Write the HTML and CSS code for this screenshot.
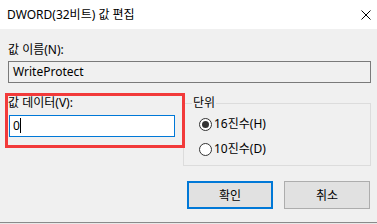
FILE: index.html
```html
<!DOCTYPE html>
<html lang="ko">

<head>
    <meta charset="UTF-8">
    <meta name="viewport" content="width=device-width, initial-scale=1.0">
    <link rel="stylesheet" href="styles.css">
    <title>DWORD(32비트) 값 편집</title>
</head>

<body>
    <div class="window">
        <div class="titlebar">
            <span class="title">DWORD(32비트) 값 편집</span>
            <svg class="close" width="10" height="10" viewBox="0 0 10 10">
                <path d="M0.5 0.5 L9.5 9.5 M9.5 0.5 L0.5 9.5" stroke="#000" stroke-width="1" fill="none" />
            </svg>
        </div>

        <div class="content">
            <div class="label">값 이름(N):</div>
            <div class="textbox readonly">WriteProtect</div>

            <div class="row">
                <div class="data">
                    <div class="label">값 데이터(V):</div>
                    <div class="textbox focused">0<span class="caret"></span></div>
                </div>

                <fieldset class="group">
                    <legend>단위</legend>
                    <div class="radio checked"><span class="dot"></span>16진수(H)</div>
                    <div class="radio"><span class="dot"></span>10진수(D)</div>
                </fieldset>
            </div>

            <div class="buttons">
                <div class="btn default">확인</div>
                <div class="btn">취소</div>
            </div>
        </div>

        <div class="behind"></div>
    </div>
</body>

</html>
```

FILE: styles.css
```css
* {
    margin: 0;
    padding: 0;
    box-sizing: border-box;
}

body {
    font-family: "Noto Sans", "Noto Sans CJK KR", sans-serif;
    font-size: 12px;
    color: #000;
}

.window {
    width: 377px;
    height: 224px;
    overflow: hidden;
    background-color: #f0f0f0;
}

.titlebar {
    height: 29px;
    background-color: #fff;
    display: flex;
    justify-content: space-between;
    align-items: center;
    padding: 0 6px 0 7px;
}

.title {
    line-height: 16px;
}

.close {
    display: block;
}

.content {
    height: 193px;
    padding: 13px 6px 0 8px;
}

.label {
    line-height: 16px;
}

.textbox {
    height: 22px;
    margin-top: 3px;
    border: 1px solid #7a7a7a;
    padding-left: 4px;
    line-height: 20px;
}

.readonly {
    background-color: #f0f0f0;
}

.row {
    display: flex;
    margin-top: 12px;
}

.data {
    position: relative;
    width: 175px;
    height: 50px;
}

/* red highlight drawn over the dialog */
.data::after {
    content: "";
    position: absolute;
    top: -2px;
    left: -3px;
    right: -2px;
    bottom: -3px;
    border: 3px solid #f23a3a;
}

.focused {
    width: 166px;
    margin-left: 1px;
    margin-top: 4px;
    border-color: #0078d7;
    background-color: #fff;
    padding-left: 3px;
}

.caret {
    display: inline-block;
    width: 1px;
    height: 15px;
    background-color: #000;
    vertical-align: -3px;
}

.group {
    flex: 1;
    border: 1px solid #dcdcdc;
    padding: 5px 0 8px 8px;
}

.group legend {
    line-height: 16px;
    padding: 0 1px;
}

.radio {
    display: flex;
    align-items: center;
    line-height: 16px;
    margin-left: 7px;
}

.radio + .radio {
    margin-top: 9px;
}

.dot {
    width: 13px;
    height: 13px;
    border: 1px solid #333;
    border-radius: 50%;
    background-color: #fff;
    margin-right: 2px;
    display: flex;
    align-items: center;
    justify-content: center;
}

.checked .dot::after {
    content: "";
    width: 7px;
    height: 7px;
    border-radius: 50%;
    background-color: #333;
}

.buttons {
    display: flex;
    justify-content: flex-end;
    gap: 11px;
    margin-top: 15px;
    margin-right: 1px;
}

.btn {
    width: 86px;
    height: 28px;
    background-color: #e1e1e1;
    border: 1px solid #adadad;
    display: flex;
    align-items: center;
    justify-content: center;
}

.btn.default {
    border: 2px solid #0078d7;
}

.behind {
    height: 2px;
    border-top: 1px solid #8a8a8a;
    background-color: #e8e8e8;
}
```
